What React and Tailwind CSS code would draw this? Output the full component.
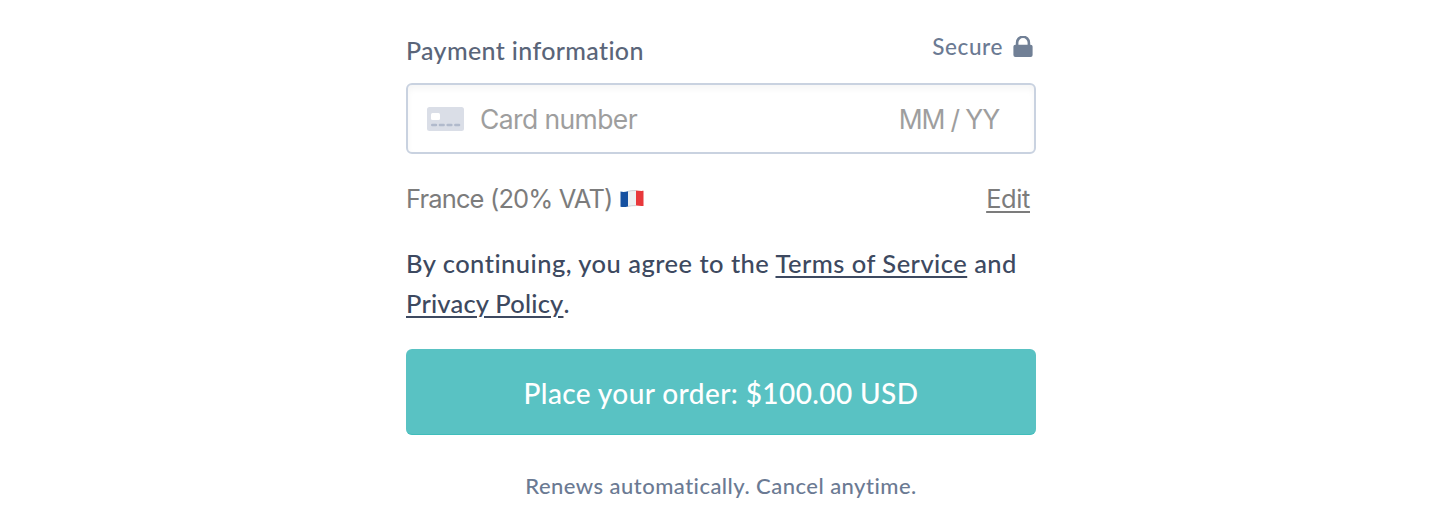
import React from 'react';

function LockIcon() {
  return (
    <svg className="w-5 h-[22px] shrink-0" viewBox="0 0 20 22" fill="none">
      <path d="M4.1 11V6.7a5.9 5.9 0 0 1 11.8 0V11" stroke="#718096" strokeWidth="2.6" />
      <rect x="0.4" y="8.8" width="19.2" height="12.2" rx="2" fill="#718096" />
    </svg>
  );
}

function CardIcon() {
  return (
    <svg className="w-[37px] h-6 shrink-0" viewBox="0 0 37 24">
      <rect width="37" height="24" rx="2.5" fill="#dadee7" />
      <rect x="4" y="6" width="9" height="7" rx="1.5" fill="#fff" />
      <path
        d="M5.2 18h3.8M12.9 18h3.8M20.6 18h3.8M28.3 18h3.8"
        stroke="#b1bacc"
        strokeWidth="2.4"
        strokeLinecap="round"
      />
    </svg>
  );
}

function FrenchFlag() {
  return (
    <svg className="w-6 h-[18px] shrink-0" viewBox="0 0 24 18">
      <path d="M0.5 1.6C3 2.1 5.5 1.9 8 1.3V16.4C5.5 17 3 17.2 0.5 16.7Z" fill="#1550a0" />
      <path d="M8 1.3C10.5 .8 13 .3 16 .5V15.6C13 15.4 10.5 15.9 8 16.4Z" fill="#eef0f2" />
      <path d="M16 .5C18.5 .6 21 1.2 23.5 .8V15.9C21 16.3 18.5 15.8 16 15.6Z" fill="#e8383b" />
      <path d="M8 1.3C10.5 .8 13 .3 16 .5M8 16.4C10.5 15.9 13 15.4 16 15.6" stroke="#c3c7cc" strokeWidth="0.8" fill="none" />
    </svg>
  );
}

const LINK = 'underline decoration-2 underline-offset-[3px]';

export default function App() {
  return (
    <div className="h-[530px] overflow-hidden bg-white font-['Lato',sans-serif]">
      <div className="ml-[406px] w-[630px] pt-[31px]">
        <div className="flex h-[52px] justify-between">
          <h2 className="text-[25px] leading-[38px] font-medium tracking-[0.36px] text-[#5a6579]">
            <span>Payment information</span>
          </h2>
          <div className="flex h-[31px] items-center gap-[10px] pr-[3px] text-[22.5px] leading-[31px] font-medium tracking-[0.6px] text-[#6b7a93]">
            <span>Secure</span>
            <LockIcon />
          </div>
        </div>

        <div className="flex h-[71px] items-center rounded-md border-2 border-[#c9d2e0] pr-[35px] pl-[19px] font-['Inter',sans-serif] text-[26.5px] text-[#9e9e9e] shadow-[inset_0_4px_6px_rgba(0,0,0,0.04)]">
          <CardIcon />
          <span className="ml-4 pt-0.5 tracking-[-0.6px]">Card number</span>
          <span className="ml-auto pt-0.5 tracking-[-1.15px]">MM / YY</span>
        </div>

        <div className="mt-[27px] flex h-9 items-center pr-1.5 font-['Inter',sans-serif] text-[25.5px] leading-9 text-[#7c7c7c]">
          <span className="tracking-[-0.85px]">France (20% VAT)</span>
          <span className="ml-[7px]"><FrenchFlag /></span>
          <a className="ml-auto tracking-[-0.4px] underline decoration-2 underline-offset-[3px]">Edit</a>
        </div>

        <p className="mt-[26px] text-[25.5px] leading-10 font-medium tracking-[0.47px] text-[#3d4960]">
          <span>By continuing, you agree to the </span>
          <a className={LINK}>Terms of Service</a>
          <span> and</span>
          <br />
          <a className={`${LINK} tracking-[0.2px]`}>Privacy Policy</a>.
        </p>

        <button className="mt-[26px] block h-[86px] w-full rounded-md border-b border-[#40bdbb] bg-[#59c2c3] pt-[3px] text-[28px] font-medium tracking-[0.4px] text-white">
          <span>Place your order: $100.00 USD</span>
        </button>

        <p className="mt-[35px] text-center text-[22px] leading-8 font-medium tracking-[0.47px] text-[#6b7a93]">
          <span>Renews automatically. Cancel anytime.</span>
        </p>
      </div>
    </div>
  );
}
